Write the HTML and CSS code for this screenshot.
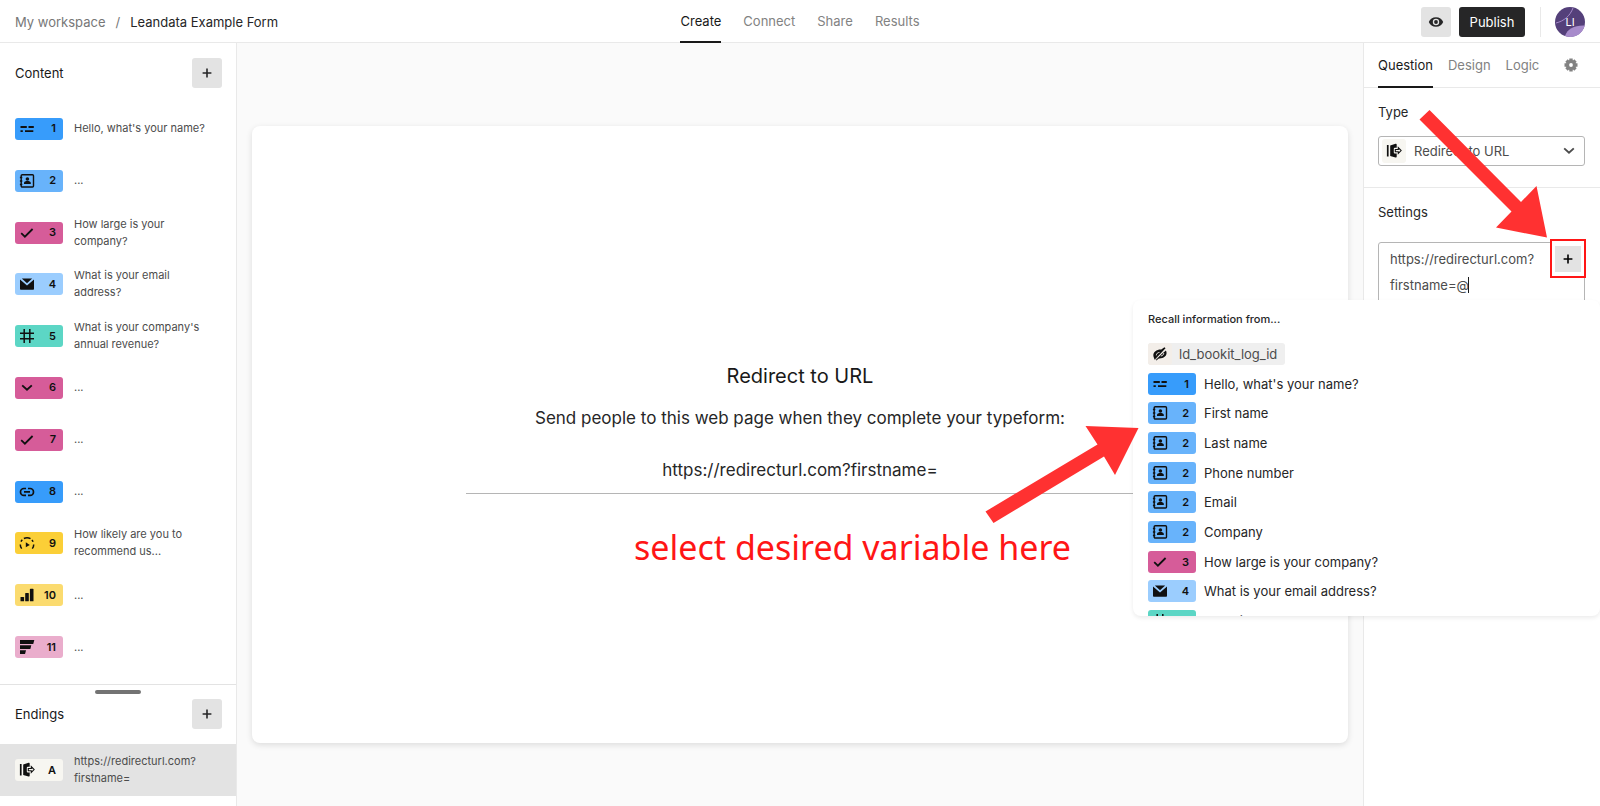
FILE: index.html
```html
<!DOCTYPE html>
<html lang="en">
<head>
  <meta charset="UTF-8">
  <title>Leandata Example Form</title>
  <link rel="stylesheet" href="styles.css">
</head>
<body>
  <!-- Shared icons -->
  <svg class="sprite" aria-hidden="true">
    <symbol id="i-short" viewBox="0 0 16 16"><path d="M1.500 6h6.300M9.500 6h5.300M1.500 10.200h2.300M6 10.200h8.300" stroke="currentColor" stroke-width="1.800" fill="none"/></symbol>
    <symbol id="i-contact" viewBox="0 0 16 16"><rect x="2.2" y="1.7" width="12.3" height="12.3" rx="1" fill="none" stroke="currentColor" stroke-width="1.4"/><path d="M0.9 4.500h2.400M0.9 8h2.400M0.9 11.500h2.400" stroke="currentColor" stroke-width="1.500"/><circle cx="8.4" cy="6" r="1.8"/><path d="M5 11V10c0-1.5 1.7-2 3.4-2s3.4.5 3.4 2v1z"/></symbol>
    <symbol id="i-check" viewBox="0 0 16 16"><path d="M2.2 8.2l3.7 3.5L13.6 4" stroke="currentColor" stroke-width="1.8" fill="none"/></symbol>
    <symbol id="i-mail" viewBox="0 0 16 16"><path d="M1 3.4l7 6.1 7-6.1V13a.8.8 0 0 1-.8.8H1.8A.8.8 0 0 1 1 13z"/><path d="M2.8 2.6h10.4L8 7.2z"/></symbol>
    <symbol id="i-hash" viewBox="0 0 16 16"><path d="M5.2 1v14M10.8 1v14M1 5.2h14M1 10.8h14" stroke="currentColor" stroke-width="1.5" fill="none"/></symbol>
    <symbol id="i-down" viewBox="0 0 16 16"><path d="M3.2 5.4L8 9.8l4.8-4.4" stroke="currentColor" stroke-width="1.9" fill="none"/></symbol>
    <symbol id="i-link" viewBox="0 0 16 16"><path d="M7 4.5H4.9a3.4 3.4 0 0 0 0 6.8H7M9 4.5h2.1a3.4 3.4 0 0 1 0 6.8H9M5 7.9h6" stroke="currentColor" stroke-width="1.7" fill="none"/></symbol>
    <symbol id="i-gauge" viewBox="0 0 16 16"><path d="M2.700 13.600A6.700 6.700 0 0 1 1.300 9.400M2 6.600a6.600 6.600 0 0 1 1.300-1.900M4.900 3.500a6.700 6.700 0 0 1 6.600.2M12.900 4.900a6.600 6.600 0 0 1 1.200 1.800M14.700 9.400a6.700 6.700 0 0 1-1.400 4.200" stroke="currentColor" stroke-width="1.500" fill="none"/><path d="M6.800 7.300l4 2.700-4 2.300z"/></symbol>
    <symbol id="i-bars" viewBox="0 0 16 16"><rect x="1.5" y="10" width="3.6" height="4.3" rx=".6"/><rect x="6.2" y="6" width="3.6" height="8.3" rx=".6"/><rect x="10.9" y="1.8" width="3.6" height="12.5" rx=".6"/></symbol>
    <symbol id="i-rank" viewBox="0 0 16 16"><path d="M1 1h14.3l-.9 3.4a.8.8 0 0 1-.8.6H1zM1 6.2h11.3l-.8 3.3a.8.8 0 0 1-.8.6H1zM1 11.2h6l-.8 3.3a.8.8 0 0 1-.8.6H1z"/></symbol>
    <symbol id="i-exit" viewBox="0 0 16 16"><path d="M.9 2h1.700v11.400H.9zM4.200 2.400l5.400-1.600a.9.9 0 0 1 1.100.9v3H8.800a1 1 0 0 0-1 1v3.800a1 1 0 0 0 1 1h1.900v3a.9.9 0 0 1-1.100.9L4.200 13z"/><path d="M9.300 6.500h3V4.700l2.800 2.900-2.800 2.900V8.700h-3z" fill="#f7f6f1" stroke="currentColor" stroke-width="1.100"/></symbol>
    <symbol id="i-hidden" viewBox="0 0 16 16"><path d="M2 12C-.2 7.600 3.300 3.400 9.300 3.600L12.400 1.200l1.200 1L2.600 13.800z"/><path d="M13.900 4.400c2.200 4.200-1.300 8.300-7 8l-2.600 2.200-1.100-1z"/><path d="M4.300 9.400c.1-1.800 1.300-2.900 3.200-3M11.800 7c-.2 1.700-1.200 2.800-3 3M14.600 2.200L3 14.400" stroke="#f3eee9" stroke-width=".9" fill="none"/></symbol>
    <symbol id="i-plus" viewBox="0 0 16 16"><path d="M8 3.6v8.8M3.6 8h8.8" stroke="currentColor" stroke-width="1.6"/></symbol>
  </svg>

  <header class="topbar">
    <nav class="breadcrumb">
      <a href="#">My workspace</a>
      <span>/</span>
      <a class="current" href="#">Leandata Example Form</a>
    </nav>
    <nav class="tabs">
      <a class="active" href="#">Create</a>
      <a href="#">Connect</a>
      <a href="#">Share</a>
      <a href="#">Results</a>
    </nav>
    <div class="actions">
      <button class="icon-button" aria-label="Preview">
        <svg width="16" height="16" viewBox="0 0 16 16"><path fill-rule="evenodd" d="M8 3.200c3.400 0 6 2 7.200 4.800C14 10.800 11.400 12.800 8 12.800S2 10.800.8 8C2 5.200 4.600 3.200 8 3.200zM8 4.800a3.200 3.200 0 1 0 0 6.400 3.200 3.200 0 0 0 0-6.400z"/><circle cx="8" cy="8" r="1.9"/></svg>
      </button>
      <button class="publish">Publish</button>
      <div class="avatar-wrap">
        <div class="avatar">
          <svg viewBox="0 0 30 30" aria-hidden="true"><circle cx="15" cy="15" r="15" fill="#54407a"/><path d="M10 29c2-7 10-11 19.800-10.500A15 15 0 0 1 10 29z" fill="#a78bcb"/><path d="M1 16c8-2 14-7 17-15" stroke="#a78bcb" fill="none"/></svg>
          <span>LI</span>
        </div>
      </div>
    </div>
  </header>

  <main class="workspace">
    <aside class="sidebar">
      <div class="section-head">
        <h2>Content</h2>
        <button class="icon-button" aria-label="Add content"><svg width="16" height="16"><use href="#i-plus"/></svg></button>
      </div>
      <ol class="questions">
        <li><span class="badge blue"><svg><use href="#i-short"/></svg>1</span><p>Hello, what's your name?</p></li>
        <li><span class="badge sky"><svg><use href="#i-contact"/></svg>2</span><p>...</p></li>
        <li><span class="badge pink"><svg><use href="#i-check"/></svg>3</span><p>How large is your company?</p></li>
        <li><span class="badge pale"><svg><use href="#i-mail"/></svg>4</span><p>What is your email address?</p></li>
        <li><span class="badge teal"><svg><use href="#i-hash"/></svg>5</span><p>What is your company's annual revenue?</p></li>
        <li><span class="badge pink"><svg><use href="#i-down"/></svg>6</span><p>...</p></li>
        <li><span class="badge pink"><svg><use href="#i-check"/></svg>7</span><p>...</p></li>
        <li><span class="badge blue"><svg><use href="#i-link"/></svg>8</span><p>...</p></li>
        <li><span class="badge yellow"><svg><use href="#i-gauge"/></svg>9</span><p>How likely are you to recommend us...</p></li>
        <li><span class="badge straw"><svg><use href="#i-bars"/></svg>10</span><p>...</p></li>
        <li><span class="badge rose"><svg><use href="#i-rank"/></svg>11</span><p>...</p></li>
      </ol>
      <div class="endings">
        <div class="handle"></div>
        <div class="section-head">
          <h2>Endings</h2>
          <button class="icon-button" aria-label="Add ending"><svg width="16" height="16"><use href="#i-plus"/></svg></button>
        </div>
        <div class="ending">
          <span class="badge cream"><svg><use href="#i-exit"/></svg>A</span>
          <p>https://redirecturl.com?<br>firstname=</p>
        </div>
      </div>
    </aside>

    <section class="canvas">
      <div class="card">
        <h1>Redirect to URL</h1>
        <p>Send people to this web page when they complete your typeform:</p>
        <p class="url">https://redirecturl.com?firstname=</p>
        <p class="note">select desired variable here</p>
      </div>
    </section>

    <aside class="panel">
      <nav class="panel-tabs">
        <a class="active" href="#">Question</a>
        <a href="#">Design</a>
        <a href="#">Logic</a>
        <button class="gear" aria-label="Form settings">
          <svg width="14" height="14" viewBox="0 0 14 14"><g stroke="#828282" stroke-width="3.400"><path d="M7 .5v13M.5 7h13M2.500 2.500l9 9M11.500 2.500l-9 9"/></g><circle cx="7" cy="7" r="5" fill="#828282"/><circle cx="7" cy="7" r="1.900" fill="#fff"/></svg>
        </button>
      </nav>
      <div class="group type">
        <label for="type">Type</label>
        <div class="select">
          <span class="select-icon"><svg width="16" height="16"><use href="#i-exit"/></svg></span>
          <select id="type"><option>Redirect to URL</option></select>
          <svg class="chevron" width="16" height="16"><use href="#i-down"/></svg>
        </div>
      </div>
      <div class="group settings">
        <label for="url">Settings</label>
        <div class="url-field">
          <textarea id="url" spellcheck="false">https://redirecturl.com?
firstname=@</textarea>
          <span class="caret"></span>
          <div class="highlight">
            <button aria-label="Insert variable"><svg width="16" height="16"><use href="#i-plus"/></svg></button>
          </div>
        </div>
      </div>
      <svg class="arrow-plus" width="130" height="130" viewBox="1418 109 130 130" aria-hidden="true"><path d="M1419.500 119.500l10-9.500 91.500 92 15.500-16 10.500 51.500-51-10 15.500-16z"/></svg>
    </aside>

    <div class="recall">
      <div class="recall-box">
        <h3>Recall information from...</h3>
        <ul>
          <li><span class="variable"><span><svg width="16" height="16"><use href="#i-hidden"/></svg></span>ld_bookit_log_id</span></li>
          <li><span class="badge blue"><svg><use href="#i-short"/></svg>1</span>Hello, what's your name?</li>
          <li><span class="badge sky"><svg><use href="#i-contact"/></svg>2</span>First name</li>
          <li><span class="badge sky"><svg><use href="#i-contact"/></svg>2</span>Last name</li>
          <li><span class="badge sky"><svg><use href="#i-contact"/></svg>2</span>Phone number</li>
          <li><span class="badge sky"><svg><use href="#i-contact"/></svg>2</span>Email</li>
          <li><span class="badge sky"><svg><use href="#i-contact"/></svg>2</span>Company</li>
          <li><span class="badge pink"><svg><use href="#i-check"/></svg>3</span>How large is your company?</li>
          <li><span class="badge pale"><svg><use href="#i-mail"/></svg>4</span>What is your email address?</li>
          <li><span class="badge teal"><svg><use href="#i-hash"/></svg>5</span>What is your company's annual revenue?</li>
        </ul>
      </div>
      <svg class="arrow-list" width="156" height="100" viewBox="984 425 156 100" aria-hidden="true"><path d="M985.500 511.500l8 11.500 110.500-66.500 11 18.500 23.500-47-53-2 12 18.500z"/></svg>
    </div>
  </main>
</body>
</html>
```
FILE: styles.css
```css
* {
  box-sizing: border-box;
}
body {
  margin: 0;
  height: 100vh;
  display: flex;
  flex-direction: column;
  font-family: Inter, "Liberation Sans", sans-serif;
  font-size: 13px;
  color: #262627;
  background: #fff;
}
h1, h2, h3, p, ol, ul {
  margin: 0;
  padding: 0;
  font-weight: 400;
}
ol, ul {
  list-style: none;
}
a {
  color: inherit;
  text-decoration: none;
}
button {
  border: none;
  padding: 0;
  font: inherit;
  cursor: pointer;
}
svg {
  display: block;
  fill: currentColor;
}
.sprite {
  position: absolute;
  width: 0;
  height: 0;
}

/* Top bar */
.topbar {
  height: 43px;
  flex: none;
  display: grid;
  grid-template-columns: 1fr auto 1fr;
  padding: 0 15px;
  border-bottom: 1px solid #e9e9e9;
}
.breadcrumb {
  display: flex;
  align-items: center;
  gap: 10px;
  color: #777;
}
.breadcrumb .current {
  color: #262627;
}
.tabs {
  display: flex;
  gap: 22px;
  color: #828282;
}
.tabs a {
  line-height: 42px;
  height: 43px;
}
.active {
  color: #191919;
  border-bottom: 2px solid #191919;
}
.actions {
  display: flex;
  justify-content: flex-end;
  align-items: center;
  gap: 8px;
}
.icon-button {
  width: 30px;
  height: 30px;
  display: grid;
  place-items: center;
  border-radius: 3px;
  background: #e3e3e3;
  color: #262627;
}
.publish {
  width: 66px;
  height: 30px;
  border-radius: 3px;
  background: #262627;
  color: #fff;
}
.avatar-wrap {
  margin-left: 7px;
  padding-left: 14px;
  border-left: 1px solid #e9e9e9;
}
.avatar {
  position: relative;
  width: 30px;
  height: 30px;
}
.avatar span {
  position: absolute;
  inset: 0;
  line-height: 30px;
  text-align: center;
  font-size: 11px;
  color: #fff;
}

.workspace {
  position: relative;
  flex: 1;
  min-height: 0;
  display: grid;
  grid-template-columns: 237px 1fr 237px;
}

/* Left column */
.sidebar {
  display: flex;
  flex-direction: column;
  border-right: 1px solid #e9e9e9;
}
.section-head {
  height: 60px;
  display: flex;
  align-items: center;
  justify-content: space-between;
  padding: 0 14px 0 15px;
}
.section-head h2 {
  font-size: 13px;
  color: #191919;
}
.questions {
  flex: 1;
  display: flex;
  flex-direction: column;
  padding-bottom: 11px;
}
.questions li,
.ending {
  flex: 1;
  display: flex;
  align-items: center;
  gap: 11px;
  padding: 0 30px 0 15px;
  font-size: 11px;
  line-height: 17px;
  color: #4c4c4c;
}
.badge {
  flex: none;
  width: 48px;
  height: 22px;
  display: flex;
  align-items: center;
  justify-content: space-between;
  padding: 0 7px 0 4px;
  border-radius: 3px;
  font-size: 11px;
  font-weight: 600;
  color: #101010;
}
.badge svg {
  width: 16px;
  height: 16px;
}
.blue { background: #379cfb; }
.sky { background: #68b3fb; }
.pale { background: #9bcdfe; }
.pink { background: #d65c99; }
.teal { background: #5cd6c5; }
.yellow { background: #fbcf37; }
.straw { background: #fbdb6f; }
.rose { background: #eaadcc; }
.cream { background: #f7f6f1; }
.endings {
  height: 122px;
  border-top: 1px solid #e3e3e3;
}
.handle {
  width: 46px;
  height: 4px;
  margin: 5px auto 0;
  border-radius: 2px;
  background: #737373;
}
.endings .section-head {
  height: 40px;
  margin-bottom: 10px;
}
.ending {
  height: 52px;
  background: #e3e3e3;
}

/* Form preview */
.canvas {
  background: #fafafa;
  padding: 83px 15px 0;
}
.card {
  aspect-ratio: 16 / 9;
  display: flex;
  flex-direction: column;
  align-items: center;
  padding-top: 234px;
  border-radius: 8px;
  background: #fff;
  box-shadow: 0 2px 6px rgba(0, 0, 0, 0.12);
  font-size: 17px;
  line-height: 26px;
}
.card h1 {
  font-size: 20px;
  line-height: 32px;
  margin-bottom: 13px;
  color: #191919;
}
.url {
  width: 668px;
  margin-top: 26px;
  padding-bottom: 10px;
  border-bottom: 1px solid #b5b5b5;
  text-align: center;
}
.note {
  margin: 30px 0 0 105px;
  font-family: "Noto Sans", sans-serif;
  font-size: 34px;
  line-height: 46px;
  color: #ff1616;
}

/* Right column */
.panel {
  position: relative;
  border-left: 1px solid #e9e9e9;
}
.panel-tabs {
  height: 45px;
  display: flex;
  gap: 15px;
  padding: 0 22px 0 14px;
  border-bottom: 1px solid #e9e9e9;
  color: #828282;
}
.panel-tabs a {
  height: 45px;
  line-height: 45px;
}
.gear {
  margin-left: auto;
  background: none;
}
.group {
  padding: 15px 15px 0 14px;
}
.group label {
  display: block;
  line-height: 18px;
  color: #262627;
}
.type {
  height: 100px;
  border-bottom: 1px solid #e9e9e9;
}
.select {
  position: relative;
  margin-top: 15px;
}
.select select {
  display: block;
  width: 100%;
  height: 30px;
  padding: 0 32px 0 35px;
  appearance: none;
  border: 1px solid #b5b5b5;
  border-radius: 3px;
  background: #fff;
  color: #4c4c4c;
  font: inherit;
}
.select-icon {
  position: absolute;
  left: 4px;
  top: 3px;
  width: 24px;
  height: 24px;
  display: grid;
  place-items: center;
  border-radius: 3px;
  background: #f7f6f1;
  color: #101010;
}
.chevron {
  position: absolute;
  right: 8px;
  top: 7px;
  color: #4c4c4c;
}
.url-field {
  position: relative;
  margin-top: 21px;
}
.url-field textarea {
  display: block;
  width: 100%;
  height: 84px;
  padding: 3px 40px 3px 11px;
  resize: none;
  border: 1px solid #b5b5b5;
  border-radius: 3px;
  font: inherit;
  line-height: 26px;
  color: #4c4c4c;
}
.caret {
  position: absolute;
  left: 90px;
  top: 35px;
  width: 1px;
  height: 16px;
  background: #191919;
}
.highlight {
  position: absolute;
  right: -1px;
  top: -3px;
  width: 36px;
  height: 39px;
  display: grid;
  place-items: center;
  border: 2px solid #ff1616;
  background: #fff;
}
.highlight button {
  width: 26px;
  height: 26px;
  display: grid;
  place-items: center;
  background: #e3e3e3;
}
.arrow-plus {
  position: absolute;
  right: 52px;
  top: 66px;
  fill: #ff3131;
}

/* Variable picker */
.recall {
  position: absolute;
  right: 0;
  top: 257px;
  width: 467px;
}
.recall-box {
  height: 316px;
  overflow: hidden;
  padding: 9px 15px 0;
  border-radius: 8px;
  background: #fff;
  box-shadow: 0 2px 4px rgba(0, 0, 0, 0.08);
}
.recall h3 {
  font-size: 11px;
  font-weight: 500;
  line-height: 20px;
}
.recall ul {
  height: 289px;
  margin-top: 14px;
  display: flex;
  flex-direction: column;
  justify-content: space-between;
}
.recall li {
  display: flex;
  align-items: center;
  gap: 8px;
  height: 22px;
}
.variable {
  display: flex;
  align-items: center;
  gap: 7px;
  height: 22px;
  padding-right: 8px;
  border-radius: 3px;
  background: #efefef;
  color: #4c4c4c;
}
.variable span {
  width: 24px;
  height: 22px;
  display: grid;
  place-items: center;
  border-radius: 3px;
  background: #f3eee9;
  color: #101010;
}
.arrow-list {
  position: absolute;
  left: -149px;
  top: 125px;
  fill: #ff3131;
}
```
